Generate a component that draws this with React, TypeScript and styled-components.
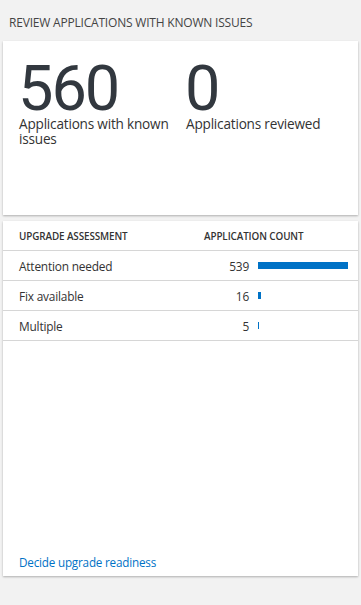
import * as React from 'react';
import styled, { createGlobalStyle } from 'styled-components';

const GlobalStyle = createGlobalStyle`
  html, body {
    margin: 0;
    padding: 0;
    background: #f2f2f2;
  }
  body {
    font-family: 'Open Sans', 'Noto Sans', sans-serif;
    color: #333;
  }
`;

interface Row {
  label: string;
  count: number;
}

const rows: Row[] = [
  { label: 'Attention needed', count: 539 },
  { label: 'Fix available', count: 16 },
  { label: 'Multiple', count: 5 },
];

const maxBar = 90;

const Root = styled.div`
  width: 361px;
  height: 605px;
  padding: 0 3px;
  box-sizing: border-box;
  display: flex;
  flex-direction: column;
`;

const Title = styled.div`
  height: 41px;
  display: flex;
  align-items: center;
  padding: 4px 0 0 6px;
  box-sizing: border-box;
  font-size: 12px;
  color: #444;
  letter-spacing: -0.2px;
`;

const Card = styled.div<{ $height: number }>`
  background: #fff;
  height: ${p => p.$height}px;
  box-shadow: 0 1px 2px rgba(0, 0, 0, 0.28);
  display: flex;
  flex-direction: column;
`;

const Stats = styled.div`
  display: grid;
  grid-template-columns: 167px 167px;
  padding: 21px 0 0 16px;
`;

const Stat = styled.div`
  display: flex;
  flex-direction: column;
`;

const BigNumber = styled.div`
  font-family: Roboto, 'Open Sans', sans-serif;
  font-size: 63px;
  line-height: 54px;
  height: 54px;
  color: #32383f;
  letter-spacing: -2px;
  margin-left: -1px;
`;

const StatLabel = styled.div`
  font-size: 13.6px;
  line-height: 14.5px;
  color: #333;
  letter-spacing: -0.2px;
  margin-top: 1px;
`;

const Spacer = styled.div`
  height: 6px;
`;

const Table = styled.div`
  display: flex;
  flex-direction: column;
`;

const HeaderRow = styled.div`
  display: grid;
  grid-template-columns: 185px 1fr;
  height: 29px;
  align-items: center;
  padding: 0 0 0 16px;
  border-bottom: 1px solid #d6d6d6;
  font-size: 9.9px;
  font-weight: 600;
  color: #333;
  letter-spacing: -0.1px;
`;

const DataRow = styled.div`
  display: grid;
  grid-template-columns: 160px 70px 1fr;
  height: 29px;
  align-items: center;
  padding-left: 16px;
  border-bottom: 1px solid #d6d6d6;
  font-size: 11.9px;
  color: #333;
  letter-spacing: -0.2px;
`;

const Count = styled.div`
  text-align: right;
`;

const BarCell = styled.div`
  padding-left: 9px;
  display: flex;
  align-items: center;
`;

const Bar = styled.div`
  height: 7px;
  background: #0072c6;
`;

const Footer = styled.div`
  margin-top: auto;
  padding: 0 0 4px 16px;
`;

const Link = styled.a`
  font-size: 11.7px;
  color: #0072c6;
  text-decoration: none;
  letter-spacing: -0.2px;
`;

export default function App() {
  const max = Math.max(...rows.map(r => r.count));
  return (
    <>
      <GlobalStyle />
      <Root>
        <Title>REVIEW APPLICATIONS WITH KNOWN ISSUES</Title>
        <Card $height={174}>
          <Stats>
            <Stat>
              <BigNumber>560</BigNumber>
              <StatLabel>Applications with known issues</StatLabel>
            </Stat>
            <Stat>
              <BigNumber>0</BigNumber>
              <StatLabel>Applications reviewed</StatLabel>
            </Stat>
          </Stats>
        </Card>
        <Spacer />
        <Card $height={355}>
          <Table>
            <HeaderRow>
              <div>UPGRADE ASSESSMENT</div>
              <div>APPLICATION COUNT</div>
            </HeaderRow>
            {rows.map(r => (
              <DataRow key={r.label}>
                <div>{r.label}</div>
                <Count>{r.count}</Count>
                <BarCell>
                  <Bar style={{ width: Math.max(1, Math.round((r.count / max) * maxBar)) }} />
                </BarCell>
              </DataRow>
            ))}
          </Table>
          <Footer>
            <Link href="#">Decide upgrade readiness</Link>
          </Footer>
        </Card>
      </Root>
    </>
  );
}
